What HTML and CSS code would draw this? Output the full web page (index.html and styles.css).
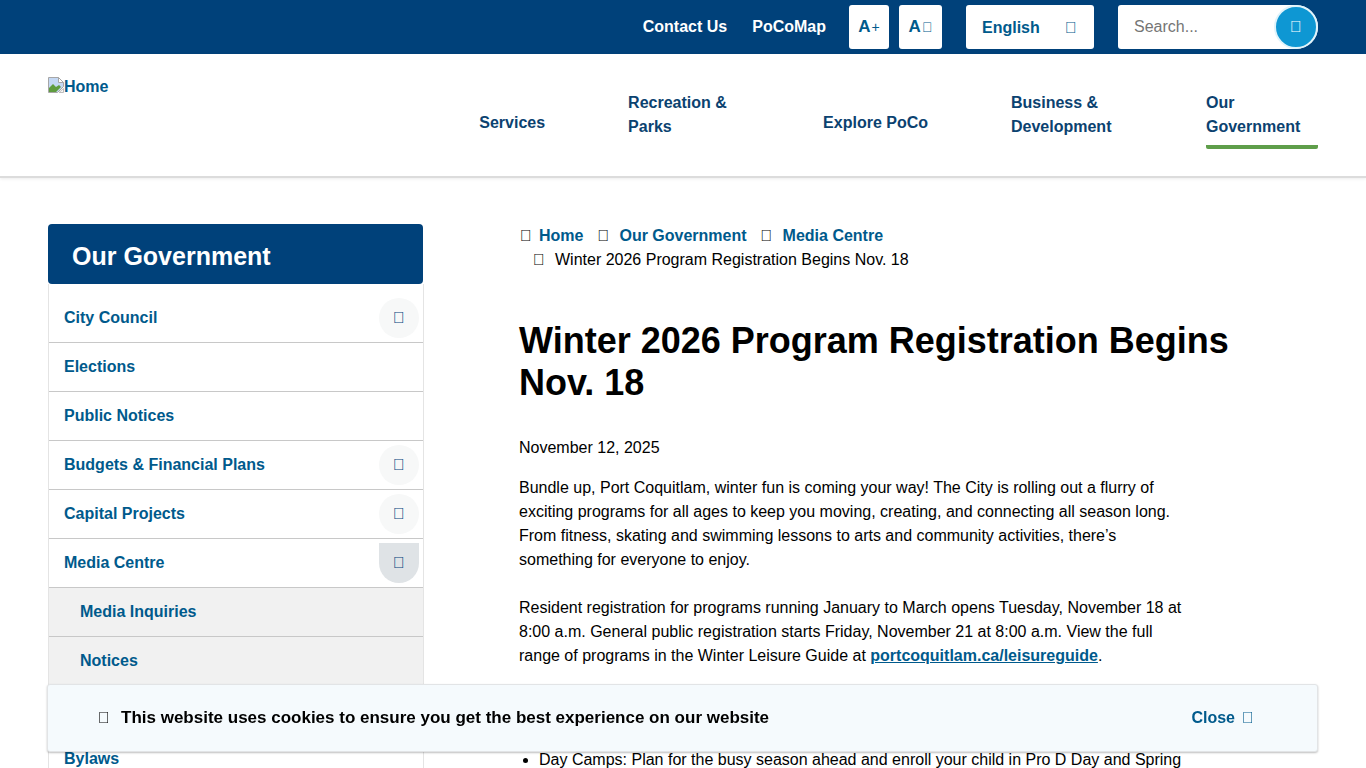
FILE: index.html
```html
<!DOCTYPE html>
<html lang="en">
<head>
<meta charset="utf-8">
<title>Winter 2026 Program Registration Begins Nov. 18</title>
<link rel="stylesheet" href="styles.css">
</head>
<body>
<div class="page">
  <div class="topbar">
    <a class="top-link" href="#">Contact Us</a>
    <a class="top-link second" href="#">PoCoMap</a>
    <button class="font-btn plus">A<span class="small">+</span></button>
    <button class="font-btn minus">A<span class="small">&#xf068;</span></button>
    <button class="lang"><span>English</span><span class="ico">&#xf107;</span></button>
    <div class="search">
      <input class="search-input" type="text" placeholder="Search...">
      <button class="search-btn"><span class="ico">&#xf002;</span></button>
    </div>
  </div>

  <header class="header">
    <a class="logo" href="#">
      <svg class="broken" width="16" height="16" viewBox="0 0 16 16" aria-hidden="true">
        <path d="M0.5 0.5H10.5L15.5 5.5V9.5L9.5 15.5H0.5Z" fill="#c4d8f4" stroke="#a6a6a6"/>
        <path d="M10.5 0.5V5.5H15.5Z" fill="#fff" stroke="#a6a6a6"/>
        <path d="M1 15V11L5 7L8 10L11 8L13 10L8 15Z" fill="#5f9c3f"/>
        <path d="M15.5 11.5V15.5H11Z" fill="#f4f4f4" stroke="#bdbdbd"/>
      </svg><span>Home</span>
    </a>
    <nav class="nav">
      <a class="nav-item single" href="#">Services</a>
      <a class="nav-item wide" href="#">Recreation &amp; Parks</a>
      <a class="nav-item single" href="#">Explore PoCo</a>
      <a class="nav-item wide" href="#">Business &amp; Development</a>
      <a class="nav-item wide active" href="#">Our Government</a>
    </nav>
  </header>

  <div class="content">
    <aside class="sidebar">
      <h2 class="side-title">Our Government</h2>
      <ul class="side-list">
        <li class="side-row"><a href="#">City Council</a><span class="toggle"><span class="ico">&#xf107;</span></span></li>
        <li class="side-row"><a href="#">Elections</a></li>
        <li class="side-row"><a href="#">Public Notices</a></li>
        <li class="side-row"><a href="#">Budgets &amp; Financial Plans</a><span class="toggle"><span class="ico">&#xf107;</span></span></li>
        <li class="side-row"><a href="#">Capital Projects</a><span class="toggle"><span class="ico">&#xf107;</span></span></li>
        <li class="side-row"><a href="#">Media Centre</a><span class="toggle open"><span class="ico">&#xf106;</span></span></li>
        <li class="side-row sub"><a href="#">Media Inquiries</a></li>
        <li class="side-row sub"><a href="#">Notices</a></li>
        <li class="side-row after-banner"><a href="#">Bylaws</a></li>
      </ul>
    </aside>

    <main class="main">
      <ol class="crumbs">
        <li class="crumb first"><span class="ico">&#xf015;</span><a href="#">Home</a></li>
        <li class="crumb"><span class="ico">&#xf105;</span><a href="#">Our Government</a></li>
        <li class="crumb"><span class="ico">&#xf105;</span><a href="#">Media Centre</a></li>
        <li class="crumb"><span class="ico">&#xf105;</span><span>Winter 2026 Program Registration Begins Nov. 18</span></li>
      </ol>
      <h1 class="title">Winter 2026 Program Registration Begins Nov. 18</h1>
      <p class="date">November 12, 2025</p>
      <div class="body-text">
        <p>Bundle up, Port Coquitlam, winter fun is coming your way! The City is rolling out a flurry of exciting programs for all ages to keep you moving, creating, and connecting all season long. From fitness, skating and swimming lessons to arts and community activities, there’s something for everyone to enjoy.</p>
        <p>Resident registration for programs running January to March opens Tuesday, November 18 at 8:00 a.m. General public registration starts Friday, November 21 at 8:00 a.m. View the full range of programs in the Winter Leisure Guide at <a class="inline-link" href="#">portcoquitlam.ca/leisureguide</a>.</p>
        <ul class="bullets">
          <li>Day Camps: Plan for the busy season ahead and enroll your child in Pro D Day and Spring</li>
        </ul>
      </div>
    </main>
  </div>

  <div class="cookie">
    <p class="cookie-text"><span class="ico">&#xf05a;</span>This website uses cookies to ensure you get the best experience on our website</p>
    <a class="cookie-close" href="#">Close<span class="ico">&#xf00d;</span></a>
  </div>
</div>
</body>
</html>
```
FILE: styles.css
```css
* { box-sizing: border-box; }
html, body { margin: 0; padding: 0; height: 100%; overflow: hidden; background: #fff; }
body { font-family: "Liberation Sans", Arial, sans-serif; font-size: 16px; line-height: 24px; color: #000; }
a { color: #005a8c; font-weight: 700; text-decoration: none; }
button { font-family: inherit; border: 0; padding: 0; cursor: pointer; }
ul, ol { list-style: none; margin: 0; padding: 0; }
.ico { font-weight: 400; }

.page { height: 100%; overflow: hidden; }

.topbar { height: 54px; background: #00417a; display: flex; align-items: center; justify-content: flex-end; padding: 0 48px 0 0; }
.top-link { color: #fff; margin-top: -1px; }
.top-link.second { margin-left: 25px; }
.font-btn { height: 44px; background: #fff; border-radius: 3px; color: #005a8c; font-size: 17px; font-weight: 700; }
.font-btn.plus { width: 40px; margin-left: 23px; }
.font-btn.minus { width: 43px; margin-left: 10px; }
.small { font-size: 14px; font-weight: 400; margin-left: 1px; }
.lang { width: 128px; height: 44px; margin-left: 24px; background: #fff; border-radius: 3px; color: #005a8c; font-size: 16px; font-weight: 700; display: flex; align-items: center; justify-content: space-between; padding: 1px 17px 0 16px; }
.search { width: 200px; height: 44px; margin-left: 24px; background: #fff; border-radius: 3px 22px 22px 3px; display: flex; align-items: center; justify-content: space-between; }
.search-input { width: 150px; height: 40px; border: 0; outline: 0; padding: 0 0 0 16px; font: 16px "Liberation Sans", Arial, sans-serif; background: transparent; }
.search-btn { width: 44px; height: 44px; flex: none; border-radius: 50%; background: #0e97d3; border: 2px solid #dff3fb; color: #fff; font-size: 16px; display: flex; align-items: center; justify-content: center; }

.header { height: 124px; padding: 21px 48px 0; display: flex; justify-content: space-between; border-bottom: 2px solid #dcdcdc; box-shadow: 0 1px 3px rgba(0, 0, 0, .08); }
.logo { display: block; height: 24px; white-space: nowrap; }
.broken { vertical-align: -1px; }
.nav { display: flex; gap: 83px; align-items: flex-start; margin-top: 15px; padding-top: 1px; height: 65px; }
.nav-item { color: #0b4270; display: block; }
.nav-item.single { align-self: center; }
.nav-item.wide { width: 112px; }
.nav-item.active { padding-bottom: 6px; border-bottom: 4px solid #5f9e4a; border-radius: 2px; }

.content { display: flex; padding: 46px 48px 0; align-items: flex-start; }
.sidebar { width: 375px; flex: none; }
.side-title { margin: 0; height: 60px; padding-left: 24px; background: #00417a; border-radius: 4px; color: #fff; font-size: 25px; line-height: 64px; font-weight: 700; }
.side-list { padding-top: 10px; border-left: 1px solid #e4e4e4; border-right: 1px solid #e4e4e4; width: 376px; }
.side-row { height: 49px; padding: 0 15px; border-bottom: 1px solid #c8c8c8; display: flex; align-items: center; justify-content: space-between; position: relative; }
.side-row.sub { background: #f1f1f1; padding-left: 31px; }
.side-row.after-banner { margin-top: 48px; border-bottom: 0; }
.toggle { position: absolute; right: 4px; top: 4px; width: 40px; height: 40px; border-radius: 50%; background: #f7f8f8; color: #00417a; display: flex; align-items: center; justify-content: center; }
.toggle.open { background: #dfe3e6; border-radius: 0 0 20px 20px; }

.main { margin-left: 96px; width: 730px; flex: none; }
.crumbs { display: flex; flex-wrap: wrap; }
.crumb { margin-left: 14px; }
.crumb.first { margin-left: 0; }
.crumb .ico { display: inline-block; width: 22px; }
.crumb.first .ico { width: 20px; padding-left: 1px; }
.title { margin: 48px 0 0; font-size: 36px; line-height: 42px; font-weight: 700; }
.date { margin: 32px 0 0; }
.body-text { width: 670px; margin-top: 16px; }
.body-text p { margin: 0 0 24px; }
.inline-link { text-decoration: underline; }
.bullets { list-style: disc; padding-left: 20px; margin-top: 80px; white-space: nowrap; }

.cookie { position: fixed; left: 47px; right: 48px; top: 684px; height: 68px; background: #f5fafd; border: 1px solid #e2e4e6; border-radius: 3px; box-shadow: 0 1px 2px rgba(0, 0, 0, .25); display: flex; align-items: center; justify-content: space-between; padding: 0 63px 1px 50px; }
.cookie-text { margin: 0; font-weight: 700; font-size: 17px; }
.cookie-text .ico { font-size: 16px; display: inline-block; width: 23px; }
.cookie-close .ico { margin-left: 7px; }
```
